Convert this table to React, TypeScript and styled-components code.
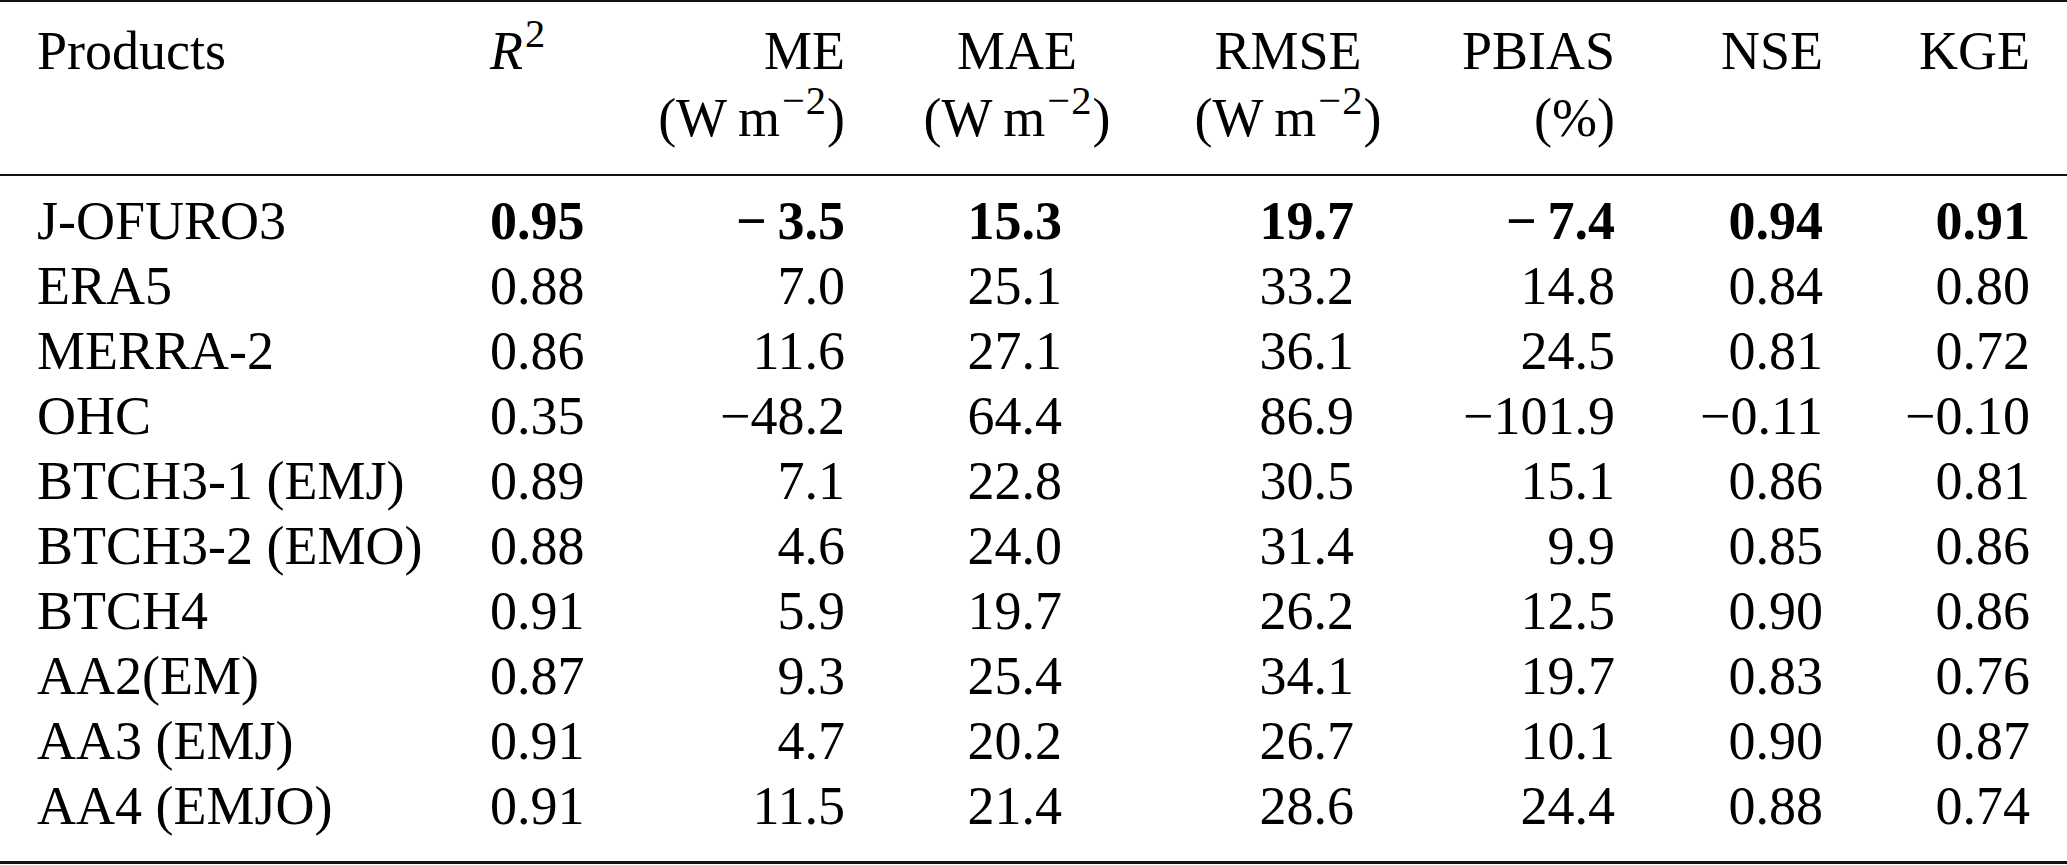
import React, { FC, ReactNode } from "react";
import styled, { createGlobalStyle } from "styled-components";

const GlobalStyle = createGlobalStyle`
  body {
    margin: 0;
    background: #fff;
  }
`;

type Align = "left" | "right" | "center";

interface ColumnSpec {
  head: Align;
  data: Align;
  pad: number;
}

// column tracks measured off the reference (content box starts at x=37)
const TRACKS = "453px 150px 205px 344px 198px 228px 208px 207px";

const columns: ColumnSpec[] = [
  { head: "left", data: "left", pad: 0 },
  { head: "left", data: "left", pad: 0 },
  { head: "right", data: "right", pad: 0 },
  { head: "center", data: "right", pad: 127 },
  { head: "center", data: "right", pad: 33 },
  { head: "right", data: "right", pad: 0 },
  { head: "right", data: "right", pad: 0 },
  { head: "right", data: "right", pad: 0 },
];

const MINUS = "\u2212";

const rows: { name: string; values: string[]; best?: boolean }[] = [
  { name: "J-OFURO3", values: ["0.95", `${MINUS}\u20093.5`, "15.3", "19.7", `${MINUS}\u20097.4`, "0.94", "0.91"], best: true },
  { name: "ERA5", values: ["0.88", "7.0", "25.1", "33.2", "14.8", "0.84", "0.80"] },
  { name: "MERRA-2", values: ["0.86", "11.6", "27.1", "36.1", "24.5", "0.81", "0.72"] },
  { name: "OHC", values: ["0.35", `${MINUS}48.2`, "64.4", "86.9", `${MINUS}101.9`, `${MINUS}0.11`, `${MINUS}0.10`] },
  { name: "BTCH3-1 (EMJ)", values: ["0.89", "7.1", "22.8", "30.5", "15.1", "0.86", "0.81"] },
  { name: "BTCH3-2 (EMO)", values: ["0.88", "4.6", "24.0", "31.4", "9.9", "0.85", "0.86"] },
  { name: "BTCH4", values: ["0.91", "5.9", "19.7", "26.2", "12.5", "0.90", "0.86"] },
  { name: "AA2(EM)", values: ["0.87", "9.3", "25.4", "34.1", "19.7", "0.83", "0.76"] },
  { name: "AA3 (EMJ)", values: ["0.91", "4.7", "20.2", "26.7", "10.1", "0.90", "0.87"] },
  { name: "AA4 (EMJO)", values: ["0.91", "11.5", "21.4", "28.6", "24.4", "0.88", "0.74"] },
];

const Table = styled.div`
  width: 2067px;
  font-family: "Liberation Serif", "Times New Roman", serif;
  font-size: 54px;
  line-height: 65px;
  color: #000;
`;

const Rule = styled.div<{ $weight: number }>`
  height: ${(p) => p.$weight}px;
  background: #111;
`;

const Grid = styled.div<{ $top: number; $bottom: number }>`
  display: grid;
  grid-template-columns: ${TRACKS};
  padding: ${(p) => p.$top}px 37px ${(p) => p.$bottom}px;
`;

const Cell = styled.div<{ $align: Align; $pad?: number; $bold?: boolean }>`
  text-align: ${(p) => p.$align};
  padding-right: ${(p) => p.$pad || 0}px;
  font-weight: ${(p) => (p.$bold ? 700 : 400)};
  white-space: nowrap;
`;

const HeadLine = styled.div`
  display: block;
  & + & {
    margin-top: 2px;
  }
`;

const Sup = styled.sup`
  font-size: 0.75em;
  line-height: 0;
  vertical-align: 0.55em;
  margin-left: 2px;
  letter-spacing: 1px;
`;

const Var = styled.i`
  font-style: italic;
`;

const Unit: FC = () => (
  <>
    (W{"\u2009"}m<Sup>{MINUS}2</Sup>)
  </>
);

const headers: ReactNode[][] = [
  ["Products"],
  [<><Var>R</Var><Sup>2</Sup></>],
  ["ME", <Unit />],
  ["MAE", <Unit />],
  ["RMSE", <Unit />],
  ["PBIAS", "(%)"],
  ["NSE"],
  ["KGE"],
];

const App: FC = () => {
  return (
    <>
      <GlobalStyle />
      <Table>
        <Rule $weight={2} />
        <Grid $top={17} $bottom={23}>
          {headers.map((lines, i) => (
            <Cell key={i} $align={columns[i].head}>
              {lines.map((line, j) => (
                <HeadLine key={j}>{line}</HeadLine>
              ))}
            </Cell>
          ))}
        </Grid>
        <Rule $weight={2} />
        <Grid $top={13} $bottom={22}>
          {rows.map((row) => (
            <React.Fragment key={row.name}>
              <Cell $align="left">{row.name}</Cell>
              {row.values.map((v, i) => (
                <Cell
                  key={i}
                  $align={columns[i + 1].data}
                  $pad={columns[i + 1].pad}
                  $bold={row.best}
                >
                  {v}
                </Cell>
              ))}
            </React.Fragment>
          ))}
        </Grid>
        <Rule $weight={3} />
      </Table>
    </>
  );
};

export default App;
